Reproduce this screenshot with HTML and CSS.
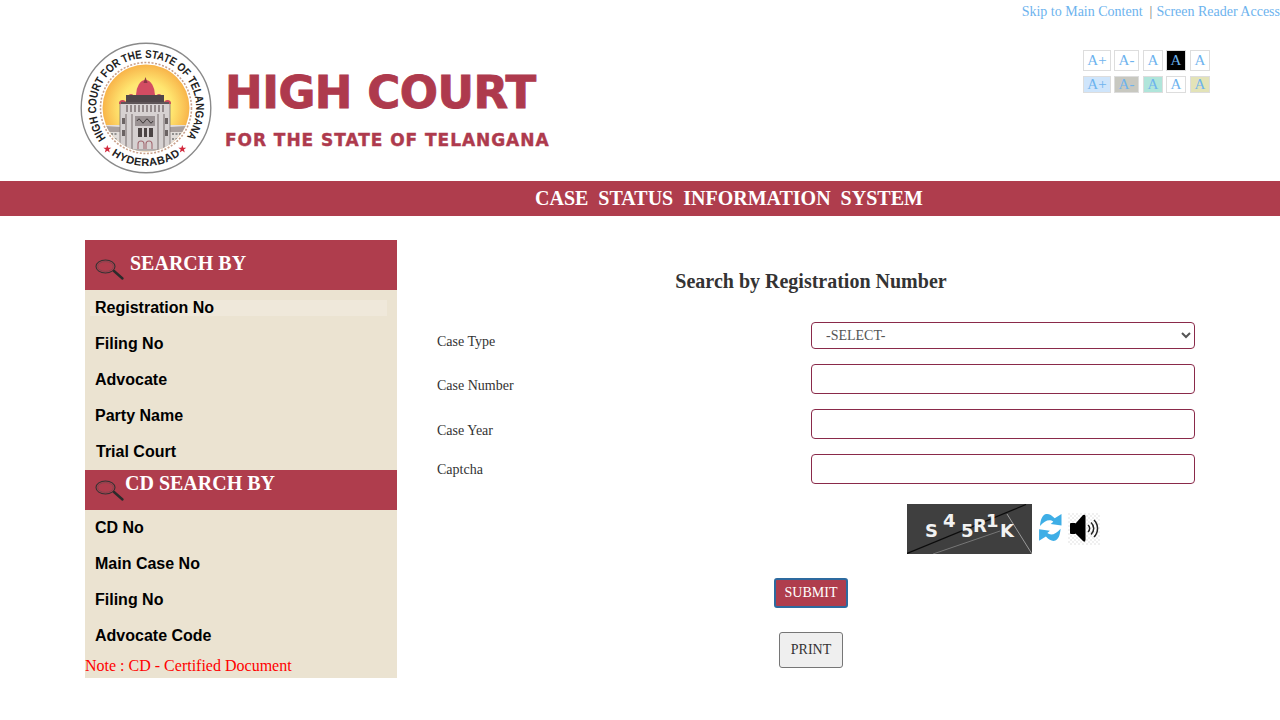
FILE: index.html
```html
<!DOCTYPE html>
<html lang="en">
<head>
<meta charset="utf-8">
<title>High Court for the State of Telangana</title>
<link rel="stylesheet" href="styles.css">
</head>
<body>
<div class="toplinks"><a>Skip to Main Content</a><span class="sep">|</span><a>Screen Reader Access</a></div>
<header class="masthead">
  <svg class="seal" viewBox="0 0 132 132" width="132" height="132" aria-hidden="true">
    <defs>
      <radialGradient id="sun" cx="50%" cy="50%" r="50%">
        <stop offset="0" stop-color="#fff3a4"/><stop offset=".6" stop-color="#ffe670"/><stop offset="1" stop-color="#f8b44a"/>
      </radialGradient>
      <path id="ringTop" d="M26.100 96.100 A50 50 0 1 1 105.900 96.100"/>
      <path id="ringBot" d="M30.300 111.700 A58 58 0 0 0 101.700 111.700"/>
      <clipPath id="inner"><circle cx="66" cy="66" r="43.500"/></clipPath>
    </defs>
    <circle cx="66" cy="66" r="64.800" fill="#fff" stroke="#8a8a8a" stroke-width="1.400"/>
    <circle cx="66" cy="66" r="45.500" fill="#fff" stroke="#c9a08a" stroke-width="1.600" stroke-dasharray="2 1.600"/>
    <circle cx="66" cy="66" r="43.500" fill="url(#sun)"/>
    <text class="ringtext"><textPath href="#ringTop" textLength="220" lengthAdjust="spacingAndGlyphs">HIGH COURT FOR THE STATE OF TELANGANA</textPath></text>
    <text class="ringtext ringbot"><textPath href="#ringBot" startOffset="50%" text-anchor="middle">HYDERABAD</textPath></text>
    <path d="M27.300 103l1 2.800h3l-2.400 1.800.9 2.900-2.500-1.700-2.500 1.700.9-2.900-2.400-1.800h3z" fill="#d2283c"/>
    <path d="M102.300 103l1 2.800h3l-2.400 1.800.9 2.900-2.500-1.700-2.500 1.700.9-2.900-2.400-1.800h3z" fill="#d2283c"/>
    <g clip-path="url(#inner)">
      <rect x="10" y="83" width="112" height="27" fill="#e3dedb"/>
      <path d="M10 83L40 85V90H10ZM90 85L122 83V90H90Z" fill="#a89f9d"/>
      <path d="M24 92h14M24 97h14M92 92h16M92 97h16" stroke="#777" stroke-width="1.600" stroke-dasharray="2 1.500"/>
      <rect x="40" y="60" width="50" height="48" fill="#d6d1d1" stroke="#7b7373" stroke-width=".8"/>
      <path d="M56 53A9.500 15 0 0 1 75 53Z" fill="#d24c62"/>
      <path d="M65.500 35L67.500 41H63.500Z" fill="#8d3445"/>
      <path d="M46.500 58A4.500 6 0 0 1 55.500 58ZM74.500 58A4.500 6 0 0 1 83.500 58ZM39 62A3.500 4 0 0 1 46 62ZM84 62A3.500 4 0 0 1 91 62Z" fill="#c9475c"/>
      <rect x="46" y="53" width="38" height="7" fill="#4f4649"/>
      <rect x="41" y="60" width="48" height="2" fill="#5e5558"/>
      <rect x="46" y="63" width="38" height="7" fill="#938a8b"/>
      <path d="M49 63v7M53 63v7M57 63v7M61 63v7M65 63v7M69 63v7M73 63v7M77 63v7M81 63v7" stroke="#f1ecec" stroke-width="1.500"/>
      <path d="M46 72v36M52 72v36M78 72v36M84 72v36" stroke="#857c7c" stroke-width="1.200"/>
      <rect x="55" y="74" width="20" height="10" fill="#9a9293"/>
      <path d="M57 79q2-4 4 0t4 0 4 0 4 0" fill="none" stroke="#3f3a3a" stroke-width="1"/>
      <path d="M42 76h3v6h-3zM42 88h3v6h-3zM85 76h3v6h-3zM85 88h3v6h-3z" fill="#6b6363"/>
      <path d="M58 86h4v9h-4zM64 86h3v9h-3zM69 86h4v9h-4z" fill="#4c4545"/>
      <path d="M58 107v-5a3 3 0 0 1 6 0v5M66 107v-5a3 3 0 0 1 6 0v5" fill="none" stroke="#a46a72" stroke-width="1.100"/>
    </g>
  </svg>
  <div class="wordmark">
    <div class="wm-main">HIGH COURT</div>
    <div class="wm-sub">FOR THE STATE OF TELANGANA</div>
  </div>
  <div class="access">
    <div class="access-row row-tall">
      <span class="a-btn w-l">A+</span><span class="a-btn w-m">A-</span><span class="a-btn after-wide">A</span><span class="a-btn bg-black">A</span><span class="a-btn after-wide">A</span>
    </div>
    <div class="access-row row-short">
      <span class="a-btn w-l bg-blue">A+</span><span class="a-btn w-m bg-grey">A-</span><span class="a-btn after-wide bg-teal">A</span><span class="a-btn">A</span><span class="a-btn after-wide bg-olive">A</span>
    </div>
  </div>
</header>
<div class="banner"><b>CASE&nbsp; STATUS&nbsp; INFORMATION&nbsp; SYSTEM</b></div>
<main class="content">
  <aside class="sidebar">
    <h2 class="side-head head-a">
      <svg class="glass" viewBox="0 0 30 22" width="30" height="22" aria-hidden="true"><ellipse cx="10.500" cy="7.500" rx="9.500" ry="6.500" fill="none" stroke="#333" stroke-width="1.100"/><ellipse cx="10.500" cy="7.500" rx="7.800" ry="4.900" fill="none" stroke="#6b4a4e" stroke-width=".6"/><path d="M19 12l8.500 7.500" stroke="#2b2b2b" stroke-width="2.400" stroke-linecap="round"/></svg>
      <span>SEARCH BY</span>
    </h2>
    <ul class="side-list">
      <li class="active">Registration No</li>
      <li>Filing No</li>
      <li>Advocate</li>
      <li>Party Name</li>
      <li class="nudge">Trial Court</li>
    </ul>
    <h2 class="side-head head-b">
      <svg class="glass" viewBox="0 0 30 22" width="30" height="22" aria-hidden="true"><ellipse cx="10.500" cy="7.500" rx="9.500" ry="6.500" fill="none" stroke="#333" stroke-width="1.100"/><ellipse cx="10.500" cy="7.500" rx="7.800" ry="4.900" fill="none" stroke="#6b4a4e" stroke-width=".6"/><path d="M19 12l8.500 7.500" stroke="#2b2b2b" stroke-width="2.400" stroke-linecap="round"/></svg>
      <span>CD SEARCH BY</span>
    </h2>
    <ul class="side-list">
      <li>CD No</li>
      <li>Main Case No</li>
      <li>Filing No</li>
      <li>Advocate Code</li>
    </ul>
    <p class="note">Note : CD - Certified Document</p>
  </aside>
  <section class="panel">
    <h1 class="panel-title">Search by Registration Number</h1>
    <form class="form">
      <label class="lab lab-1">Case Type</label>
      <select class="field sel"><option>-SELECT-</option></select>
      <label class="lab lab-2">Case Number</label>
      <input class="field txt" type="text">
      <label class="lab lab-3">Case Year</label>
      <input class="field txt" type="text">
      <label class="lab lab-4">Captcha</label>
      <input class="field txt" type="text">
    </form>
    <div class="captcha-row">
      <svg class="captcha" viewBox="0 0 125 50" width="125" height="50" aria-hidden="true">
        <rect width="125" height="50" fill="#3f3f3f"/>
        <path d="M0 49.500L119 .5" stroke="#0c0c0c" stroke-width="1.200"/>
        <path d="M26 50L93 27" stroke="#777" stroke-width="1"/>
        <path d="M100 10L125 50" stroke="#999" stroke-width="1"/>
        <text class="cap" x="18" y="33">S</text>
        <text class="cap" x="36" y="23">4</text>
        <text class="cap" x="54" y="33">5</text>
        <text class="cap" x="66" y="28">R</text>
        <text class="cap" x="79" y="23">1</text>
        <text class="cap" x="93" y="33">K</text>
      </svg>
      <svg class="refresh" viewBox="0 0 26 32" width="26" height="32" aria-hidden="true">
        <path d="M2 13C2.500 7 4 2 8 1C11 .5 13.500 2 16.700 5.300L23.500 1V12.500L12.700 11L15.300 8.700C12 6 7 7 2 13Z" fill="#3eaee6"/>
        <path d="M2 13C2.500 7 4 2 8 1C11 .5 13.500 2 16.700 5.300L23.500 1V12.500L12.700 11L15.300 8.700C12 6 7 7 2 13Z" fill="#3eaee6" transform="rotate(180 12.300 14.400)"/>
      </svg>
      <svg class="speaker" viewBox="0 0 32 32" width="32" height="32" aria-hidden="true">
        <defs><pattern id="check" width="4" height="4" patternUnits="userSpaceOnUse"><rect width="4" height="4" fill="#fff"/><rect width="2" height="2" fill="#f0f0f0"/><rect x="2" y="2" width="2" height="2" fill="#f0f0f0"/></pattern></defs>
        <rect width="32" height="32" fill="url(#check)"/>
        <rect x="2" y="10" width="6" height="11" rx="1" fill="#000"/>
        <path d="M8 10L15 2Q17 1 17.500 3V27Q17 30 15 28L8 21Z" fill="#000"/>
        <path d="M20 12a4.500 4.500 0 0 1 0 7M23 9.500a8 8 0 0 1 0 12M26 7a12 12 0 0 1 0 17" fill="none" stroke="#222" stroke-width="1.500"/>
      </svg>
    </div>
    <div class="actions">
      <button class="btn btn-submit" type="button">SUBMIT</button>
      <button class="btn btn-print" type="button">PRINT</button>
    </div>
  </section>
</main>
</body>
</html>
```
FILE: styles.css
```css
* { box-sizing: border-box; }
html, body { margin: 0; padding: 0; }
body { background: #fff; font-family: "Liberation Serif", "Times New Roman", serif; font-size: 14px; color: #333; height: 720px; overflow: hidden; }

.toplinks { height: 22px; line-height: 24px; text-align: right; color: #6db3ee; font-size: 14px; }
.toplinks .sep { color: #777; margin: 0 4px 0 7px; }

.masthead { height: 159px; display: flex; align-items: flex-start; padding: 20px 70px 0 80px; }
.seal { flex: none; display: block; }
.ringtext { font-family: "Liberation Sans", Arial, sans-serif; font-weight: 700; font-size: 11.500px; fill: #222; }
.ringbot { font-size: 11px; letter-spacing: .4px; }

.wordmark { margin-left: 13px; color: #ae3a4d; font-family: "DejaVu Sans", sans-serif; font-weight: 700; }
.wm-main { font-size: 45px; line-height: 46px; margin-top: 28px; letter-spacing: -.5px; white-space: nowrap; -webkit-text-stroke: .9px #ae3a4d; }
.wm-sub { font-size: 17px; line-height: 18px; margin-top: 15px; letter-spacing: .95px; white-space: nowrap; -webkit-text-stroke: .4px #ae3a4d; }

.access { margin-left: auto; margin-top: 8px; display: flex; flex-direction: column; gap: 5px; }
.access-row { display: flex; gap: 3px; }
.row-tall .a-btn { height: 21px; }
.row-short .a-btn { height: 17px; }
.a-btn { width: 20px; border: 1px solid #ddd; background: #fff; color: #6db3ee; font-size: 15px; display: flex; align-items: center; justify-content: center; line-height: 1; }
.a-btn.after-wide { margin-left: 1px; }
.w-l { width: 28px; }
.w-m { width: 25px; }
.bg-black { background: #000; border-color: #ddd; }
.bg-blue { background: #cfe5fb; }
.bg-grey { background: #c8c8c0; }
.bg-teal { background: #b0e5da; }
.bg-olive { background: #e3e3b8; }

.banner { height: 35px; background: #af3d4d; color: #fff; font-size: 20px; line-height: 35px; padding-left: 535px; white-space: nowrap; }

.content { display: flex; padding: 24px 85px 0; }
.sidebar { flex: none; width: 312px; height: 438px; background: #ebe3d1; }
.side-head { margin: 0; background: #af3d4d; color: #fff; font-size: 20px; font-weight: 700; display: flex; white-space: nowrap; }
.head-a { height: 50px; padding: 13px 0 0 10px; gap: 5px; line-height: 20px; }
.head-b { height: 40px; padding: 3px 0 0 10px; gap: 0; line-height: 20px; }
.head-a .glass { margin-top: 6px; }
.head-b .glass { margin-top: 7px; }
.side-list { list-style: none; margin: 0; padding: 10px 10px 10px 5px; display: flex; flex-direction: column; gap: 20px; }
.side-list li { height: 16px; line-height: 16px; padding-left: 5px; font-family: "Liberation Sans", Arial, sans-serif; font-weight: 700; font-size: 16px; color: #000; }
.side-list li.active { background: #efe8da; }
.side-list li.nudge { padding-left: 6px; }
.note { margin: 3px 0 0; color: #f00; font-size: 16px; line-height: 18px; }

.panel { flex: none; width: 768px; margin-left: 30px; }
.panel-title { margin: 31px 0 0; height: 20px; font-size: 20px; line-height: 20px; text-align: center; font-weight: 700; color: #333; }
.form { margin-top: 31px; display: grid; grid-template-columns: 384px 384px; grid-template-rows: 27px 30px 30px 30px; row-gap: 15px; }
.lab { padding-left: 10px; color: #333; font-size: 14px; line-height: 16px; }
.lab-1 { padding-top: 12px; }
.lab-2 { padding-top: 14px; }
.lab-3 { padding-top: 14px; }
.lab-4 { padding-top: 8px; }
.field { display: block; width: 100%; border: 1px solid #8a2a4a; border-radius: 4px; background: #fff; font-family: inherit; font-size: 14px; color: #555; }
.sel { height: 27px; padding: 0 0 0 10px; }
.txt { height: 30px; padding: 0 12px; }

.captcha-row { margin-top: 20px; padding-left: 480px; display: flex; align-items: center; height: 50px; }
.captcha { flex: none; display: block; }
.refresh { flex: none; margin-left: 6px; margin-right: 4px; }
.speaker { flex: none; }
.cap { font-family: "DejaVu Sans", sans-serif; font-weight: 700; font-size: 18px; fill: #f2f2f2; }

.actions { margin-top: 24px; display: flex; flex-direction: column; align-items: center; gap: 24px; }
.btn { font-family: inherit; font-size: 14px; padding: 0; }
.btn-submit { width: 74px; height: 30px; background: #af3d4d; color: #fff; border: 2px solid #2d6a9f; border-radius: 3px; }
.btn-print { width: 64px; height: 36px; background: #efefef; color: #333; border: 1px solid #767676; border-radius: 3px; }
```
